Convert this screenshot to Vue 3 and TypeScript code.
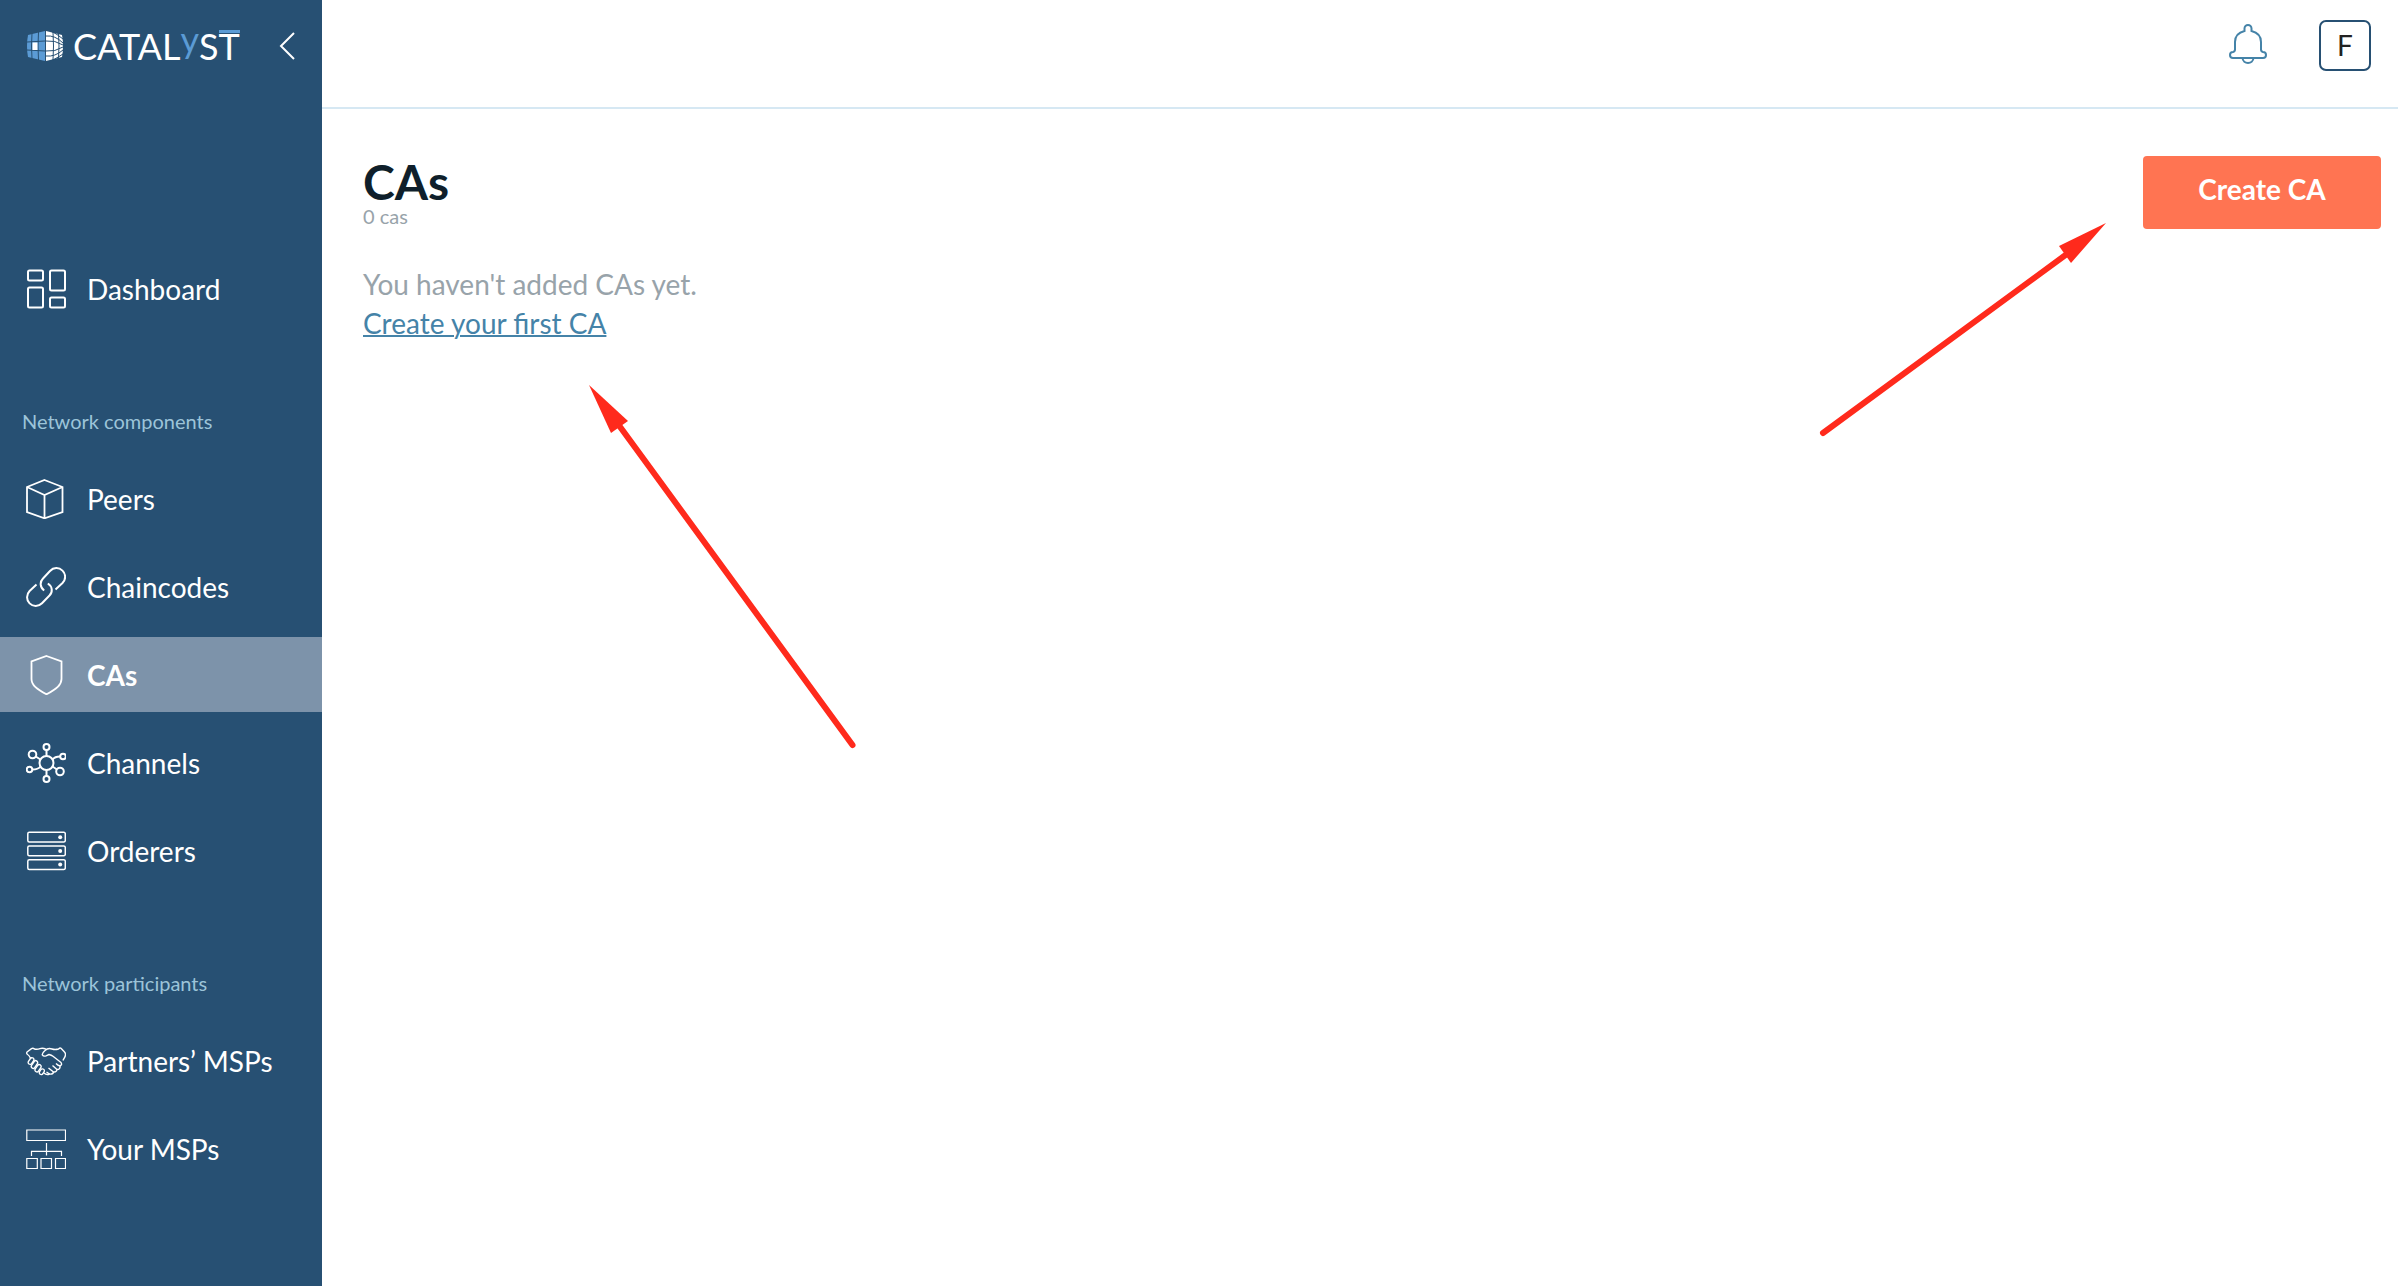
<script setup lang="ts">
import { ref } from 'vue'

interface NavItem {
  id: string
  label: string
}

interface NavGroup {
  title: string
  items: NavItem[]
}

const groups: NavGroup[] = [
  { title: '', items: [{ id: 'dashboard', label: 'Dashboard' }] },
  {
    title: 'Network components',
    items: [
      { id: 'peers', label: 'Peers' },
      { id: 'chaincodes', label: 'Chaincodes' },
      { id: 'cas', label: 'CAs' },
      { id: 'channels', label: 'Channels' },
      { id: 'orderers', label: 'Orderers' },
    ],
  },
  {
    title: 'Network participants',
    items: [
      { id: 'partners', label: 'Partners’ MSPs' },
      { id: 'msps', label: 'Your MSPs' },
    ],
  },
]

const active = ref('cas')
</script>

<template>
  <div class="app">
    <aside class="sidebar">
      <div class="brand">
        <a class="logo" href="#" aria-label="Catalyst">
          <svg class="cube" viewBox="0 0 36 30" width="36" height="30" aria-hidden="true">
            <path fill="#5b9bd5" d="M1 4 18 0V30L1 26Q-1 15 1 4Z" />
            <path fill="#fff" d="M19 0 35 4Q37 15 35 26L19 30Z" />
            <g fill="none" stroke="#275073">
              <path d="M5 2Q4 15 5 28M11.500 1Q10.500 15 11.500 29M0 11 18 10M0 19 18 20" />
              <path d="M26 1Q27 15 26 29M31.500 2Q32.500 15 31.500 28" />
              <path d="M19 5Q28 4 36 12M19 10Q28 9 36 14M19 20Q28 21 36 16M19 25Q28 26 36 19M24 0Q30 3 36 8M24 30Q30 27 36 23" />
              <path d="M18.500 0V30" />
            </g>
            <path fill="#fff" d="M5.500 11.500H10.500V19H5.500Z" />
          </svg>
          <span class="wordmark">CATAL<span class="accent">y</span>S<span class="barred">T</span></span>
        </a>
        <button class="collapse" type="button" aria-label="Collapse menu">
          <svg viewBox="0 0 16 28" width="16" height="28" aria-hidden="true">
            <path d="M15 1 2 14 15 27" fill="none" stroke="#fff" stroke-width="2" />
          </svg>
        </button>
      </div>

      <nav aria-label="Main">
        <section v-for="group in groups" :key="group.title" class="group">
          <h2 v-if="group.title" class="group-title">{{ group.title }}</h2>
          <ul class="items">
            <li v-for="item in group.items" :key="item.id">
              <a
                href="#"
                class="item"
                :class="{ active: item.id === active }"
                :aria-current="item.id === active ? 'page' : undefined"
                @click.prevent="active = item.id"
              >
                <svg class="icon" viewBox="0 0 40 40" width="40" height="40" aria-hidden="true">
                  <g v-if="item.id === 'dashboard'" stroke-width="2">
                    <rect x="2" y="1.500" width="15" height="10" rx="1.500" />
                    <rect x="2" y="18.500" width="15" height="20" rx="1.500" />
                    <rect x="24" y="1.500" width="15" height="20" rx="1.500" />
                    <rect x="24" y="28.500" width="15" height="10" rx="1.500" />
                  </g>
                  <g v-else-if="item.id === 'peers'" stroke-width="1.800">
                    <path d="M18.500 1 36.500 8V33L18.500 39.300 1 33V8ZM1 8 18.500 16 36.500 8M18.500 16V39" />
                  </g>
                  <g v-else-if="item.id === 'chaincodes'" stroke-width="2">
                    <path d="M18.200 23.500C14 20.500 13.500 15 17 11.500L24 4C27.500 .2 33 .2 36.500 3.600C40 7 40 12.500 36.500 16L29.500 22.500" />
                    <path d="M21.800 16.500C26.500 19.500 27 25 23.500 28.500L16 36.300C12.500 39.800 7 39.800 3.600 36.400C.2 33 .2 27.500 3.600 24L10.500 17.500" />
                  </g>
                  <g v-else-if="item.id === 'cas'" stroke-width="1.800">
                    <path d="M20.500 1 35.500 6.500V24C35.500 30 30.500 34 20.500 39.300C10.500 34 5.500 30 5.500 24V6.500Z" />
                  </g>
                  <g v-else-if="item.id === 'channels'" stroke-width="2">
                    <circle cx="20.500" cy="20" r="7" />
                    <circle cx="20.500" cy="4" r="3" />
                    <circle cx="20.500" cy="36" r="3" />
                    <circle cx="6.500" cy="11.500" r="3.800" />
                    <circle cx="34" cy="28.500" r="3.800" />
                    <circle cx="37" cy="13.500" r="2.800" />
                    <circle cx="3.500" cy="26.500" r="2.800" />
                    <path d="M20.500 7V13M20.500 27V33M9.700 13.500 14.500 16.500M26.500 23.500 31 26.500M26.500 16.500C28.500 14 30 13.500 34 13.500M6.500 26.500C11 26.500 12.500 26 14.500 23.500" />
                  </g>
                  <g v-else-if="item.id === 'orderers'" stroke-width="1.500">
                    <rect x="1.800" y="1.300" width="37.500" height="9.700" rx="1.500" />
                    <rect x="1.800" y="15" width="37.500" height="9.700" rx="1.500" />
                    <rect x="1.800" y="28.800" width="37.500" height="9.700" rx="1.500" />
                    <g fill="#fff" stroke="none">
                      <circle cx="34.200" cy="6.200" r="2" />
                      <circle cx="34.200" cy="20" r="2" />
                      <circle cx="34.200" cy="33.500" r="2" />
                    </g>
                  </g>
                  <g v-else-if="item.id === 'partners'" stroke-width="1.400" stroke-linejoin="round">
                    <path d="M5 18C4 16 3.500 14.500 1 13Q.4 12 1 11L5.500 7.600Q7 6.700 8.500 8Q11 8.800 14 7.600Q17 6.800 20 8.200" />
                    <path d="M37 19.500C38 17 39.500 16 39.500 13.500Q39.500 12 38.500 11L35 7.200Q34 6.500 32.500 8Q29 9 26 8Q22 6.600 19 9.500Q16 12 16.300 13.800Q17.500 15.700 20 14.800L23 13.500Q25.500 14 27 15.200L35 21.500Q36.500 24 34 24.800Q32.500 25 30 22.500" />
                    <path d="M34 24.800Q34.500 28.500 31 28.500L26.500 24.500M31 28.500Q30.500 31.500 27.500 31L22.500 27M27.500 31Q27 33.500 23.500 33L20.500 31" />
                    <rect x="-1.900" y="-3.600" width="3.900" height="7.200" rx="1.900" transform="translate(5 20) rotate(35)" />
                    <rect x="-1.900" y="-4.200" width="3.900" height="8.400" rx="1.900" transform="translate(8.400 23.500) rotate(35)" />
                    <rect x="-1.900" y="-4" width="3.900" height="8" rx="1.900" transform="translate(12 27.200) rotate(35)" />
                    <rect x="-1.900" y="-3" width="3.900" height="6" rx="1.900" transform="translate(15.800 30.700) rotate(35)" />
                    <path d="M18 32Q20.500 34.500 23.500 33" />
                  </g>
                  <g v-else stroke-width="1.200">
                    <path d="M.8 1H39.500V11.500H.8ZM20.500 14V26.500M5.500 27V22.300H35.500V27M.8 29.500H11.300V39.500H.8ZM15 29.500H25.500V39.500H15ZM29.500 29.500H39.500V39.500H29.500Z" />
                  </g>
                </svg>
                <span>{{ item.label }}</span>
              </a>
            </li>
          </ul>
        </section>
      </nav>
    </aside>

    <div class="page">
      <header class="topbar">
        <button class="bell" type="button" aria-label="Notifications">
          <svg viewBox="0 0 38 40" width="38" height="40" aria-hidden="true">
            <g fill="none" stroke="#4583a8" stroke-width="2">
              <path d="M15.500 7V4.500A3.500 3.500 0 0 1 22.500 4.500V7C28.500 8.500 32 12.500 32 18V25.500Q32 27.500 34 28A3 3 0 0 1 34 34H4A3 3 0 0 1 4 28Q6 27.500 6 25.500V18C6 12.500 9.500 8.500 15.500 7Z" />
              <path d="M13.500 34C14 40.500 24 40.500 24.500 34" />
            </g>
          </svg>
        </button>
        <button class="avatar" type="button" aria-label="Account F">F</button>
      </header>

      <main class="content">
        <div class="heading">
          <div>
            <h1>CAs</h1>
            <p class="count">0 cas</p>
          </div>
          <button class="create" type="button">Create CA</button>
        </div>
        <div class="empty">
          <p>You haven't added CAs yet.</p>
          <a href="#">Create your first CA</a>
        </div>

        <svg class="arrow arrow-link" viewBox="0 0 268 364" width="268" height="364" aria-hidden="true">
          <path d="M29 39 263.500 360" stroke="#ff2a1c" stroke-width="6" stroke-linecap="round" />
          <path d="M0 0 39 36 22 48Z" fill="#ff2a1c" />
        </svg>
        <svg class="arrow arrow-button" viewBox="0 0 288 214" width="288" height="214" aria-hidden="true">
          <path d="M4 210 252 28" stroke="#ff2a1c" stroke-width="6" stroke-linecap="round" />
          <path d="M287 0 240 23 252 40Z" fill="#ff2a1c" />
        </svg>
      </main>
    </div>
  </div>
</template>

<style>
body {
  margin: 0;
  background: #fff;
}
</style>

<style scoped>
.app {
  display: flex;
  min-height: 100vh;
  font-family: Lato, 'Open Sans', sans-serif;
  font-size: 28px;
  line-height: 34px;
}

h1,
h2,
p,
ul {
  margin: 0;
  padding: 0;
}

button {
  margin: 0;
  padding: 0;
  border: 0;
  background: none;
  font: inherit;
  cursor: pointer;
}

svg {
  display: block;
}

.sidebar {
  flex: none;
  width: 322px;
  background: #275073;
  color: #fff;
}

.brand {
  display: flex;
  align-items: center;
  justify-content: space-between;
  height: 92px;
  margin-bottom: 159px;
  padding: 0 27px;
}

.logo {
  display: flex;
  align-items: center;
  gap: 10px;
  color: #fff;
  text-decoration: none;
}

.wordmark {
  font-size: 36px;
  line-height: 40px;
}

.accent {
  color: #5b9bd5;
  vertical-align: 7px;
  line-height: 1px;
}

.barred {
  display: inline-block;
  line-height: 26px;
  border-top: 3px solid #5b9bd5;
}

.group-title {
  padding: 83px 22px 28px;
  color: #9cc4d9;
  font-size: 20px;
  font-weight: 400;
  line-height: 24px;
}

.items {
  display: flex;
  flex-direction: column;
  gap: 13px;
  list-style: none;
}

.item {
  display: flex;
  align-items: center;
  gap: 21px;
  height: 75px;
  padding: 0 26px;
  color: #fff;
  text-decoration: none;
}

.item.active {
  background: #7d93aa;
  font-weight: 700;
}

.icon {
  flex: none;
  fill: none;
  stroke: #fff;
}

.page {
  flex: 1;
  min-width: 0;
}

.topbar {
  display: flex;
  align-items: flex-start;
  justify-content: flex-end;
  gap: 52px;
  padding: 20px 27px 36px;
  border-bottom: 2px solid #d6e8f3;
}

.bell {
  padding-top: 4px;
}

.avatar {
  box-sizing: border-box;
  width: 52px;
  height: 51px;
  padding-bottom: 2px;
  border: 2px solid #275073;
  border-radius: 7px;
  color: #222;
}

.content {
  position: relative;
  padding: 47px 17px 40px 41px;
}

.heading {
  display: flex;
  align-items: flex-start;
  justify-content: space-between;
  margin-bottom: 36px;
}

h1 {
  color: #0f1f2b;
  font-size: 48px;
  font-weight: 700;
  line-height: 51px;
}

.count {
  color: #98a3aa;
  font-size: 20px;
  line-height: 18px;
}

.create {
  min-width: 238px;
  padding: 16px 24px 23px;
  border-radius: 4px;
  background: #ff7452;
  color: #fff;
  font-weight: 700;
}

.empty {
  color: #98a3aa;
  line-height: 39px;
}

.empty a {
  color: #4583a8;
  text-decoration-thickness: 2px;
}

.arrow {
  position: absolute;
  fill: none;
  pointer-events: none;
}

.arrow-link {
  top: 276px;
  left: 267px;
}

.arrow-button {
  top: 114px;
  right: 291px;
}
</style>
